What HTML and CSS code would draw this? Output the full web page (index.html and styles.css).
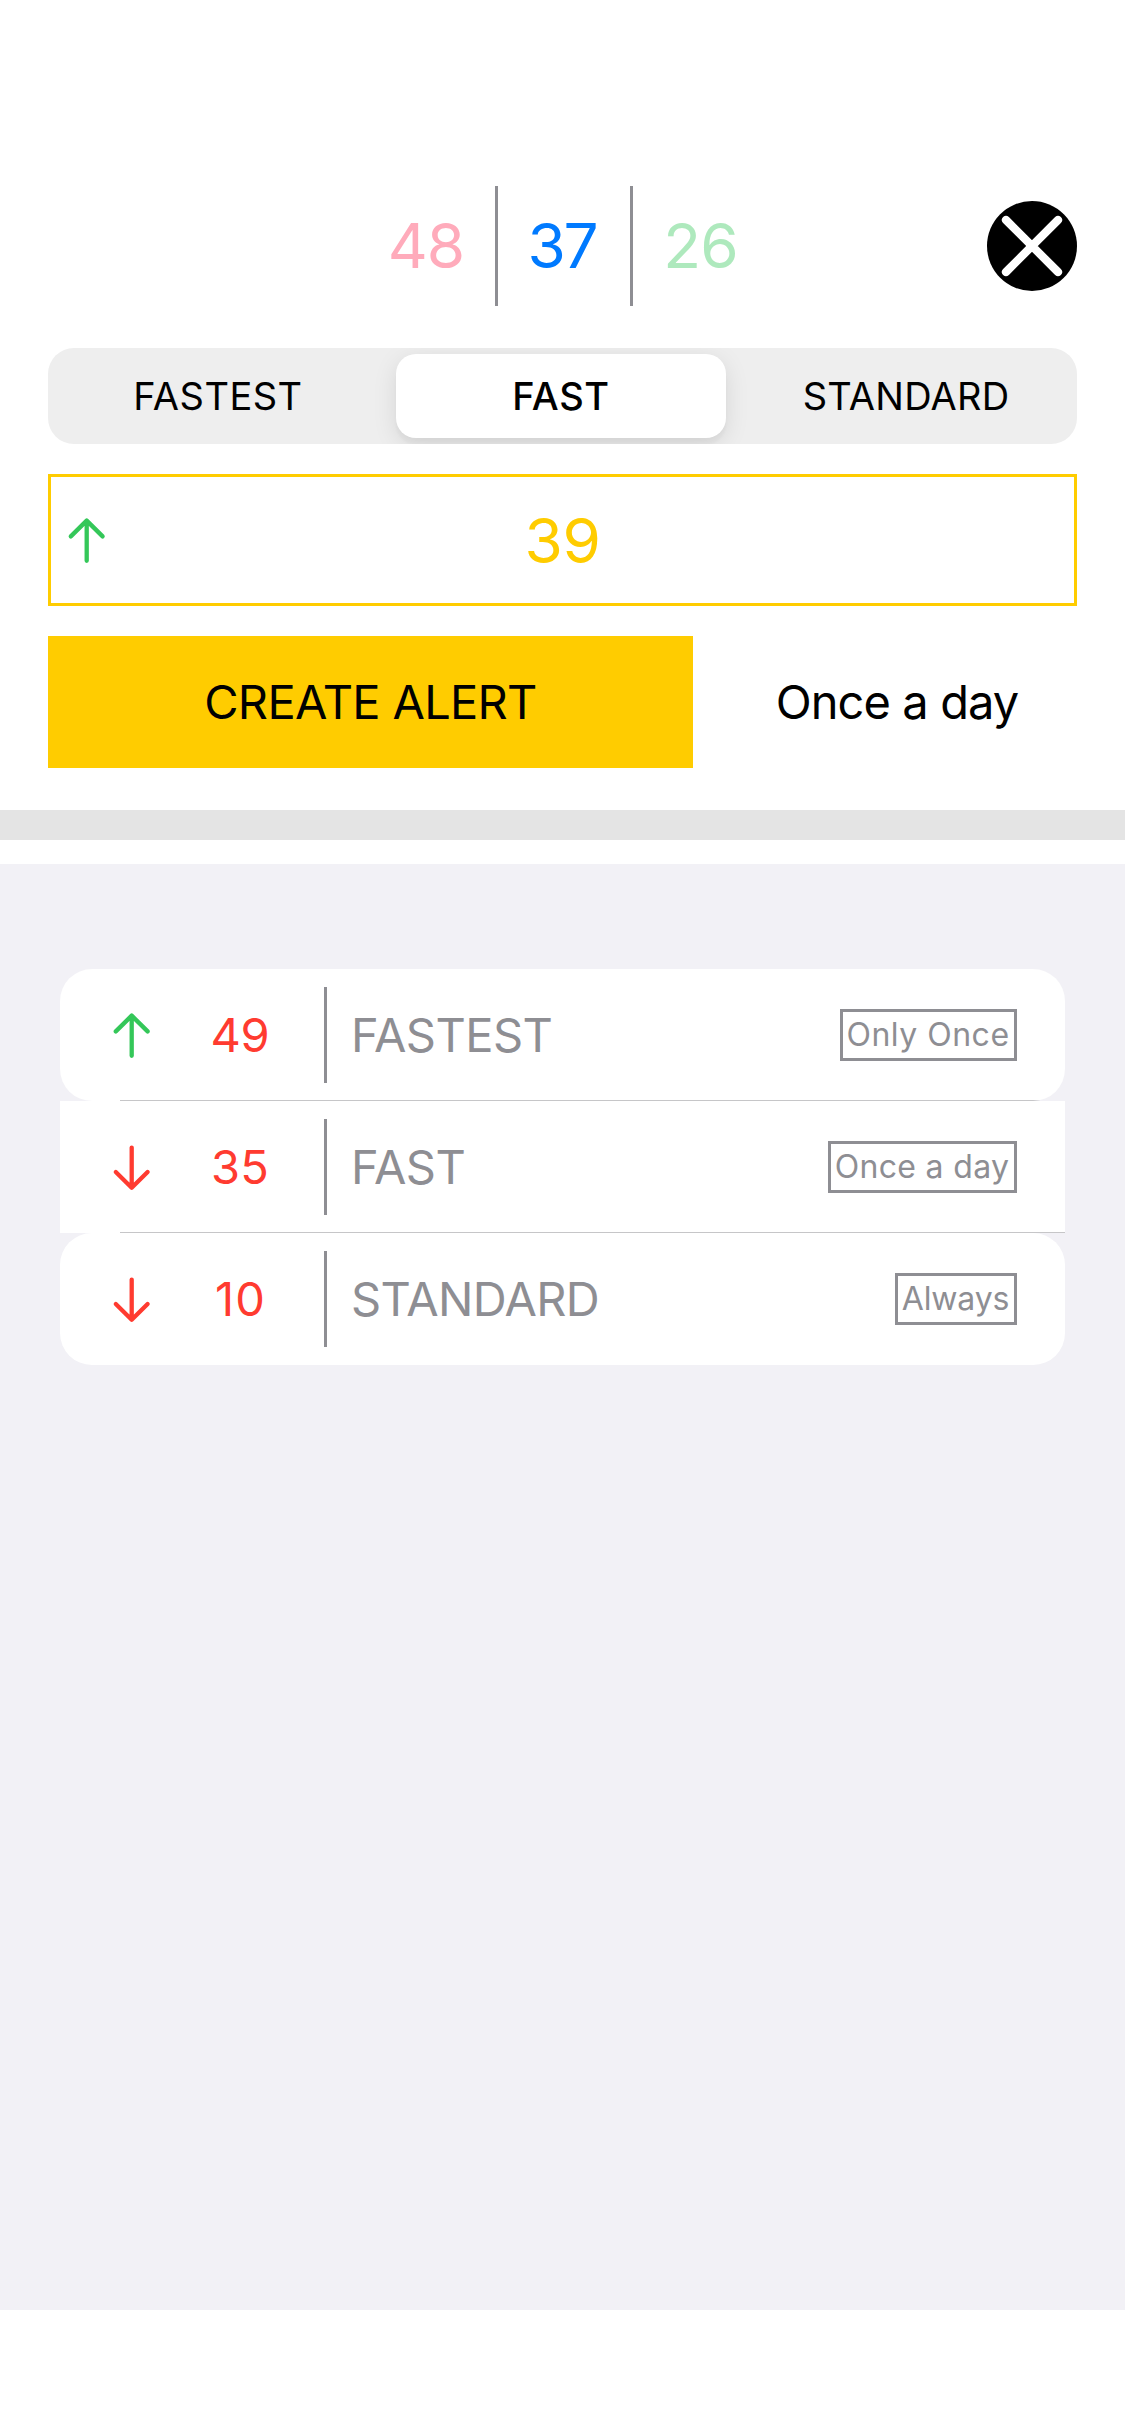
FILE: index.html
```html
<!DOCTYPE html>
<html lang="en">
<head>
<meta charset="utf-8">
<title>Alerts</title>
<link rel="stylesheet" href="styles.css">
</head>
<body>
<main class="screen">
  <header class="top">
    <span class="price fastest">48</span>
    <i class="rule"></i>
    <span class="price fast">37</span>
    <i class="rule"></i>
    <span class="price standard">26</span>
    <button class="close" aria-label="Close"><svg viewBox="0 0 90 90"><path d="M19 19 71 71M71 19 19 71"/></svg></button>
  </header>
  <nav class="segments">
    <span class="segment first">FASTEST</span>
    <span class="segment active">FAST</span>
    <span class="segment last">STANDARD</span>
  </nav>
  <div class="field">
    <svg class="arrow up"><path d="M23.7 48.8V8.6M7.8 24.4 23.7 8.6 39.6 24.4"/></svg>
    <span class="value">39</span>
  </div>
  <div class="actions">
    <button class="create">CREATE ALERT</button>
    <button class="repeat">Once a day</button>
  </div>
  <div class="band"></div>
  <section class="list">
    <div class="row first">
      <svg class="arrow up"><path d="M23.7 48.8V8.6M7.8 24.4 23.7 8.6 39.6 24.4"/></svg>
      <span class="limit n49">49</span><i class="line"></i><span class="name">FASTEST</span><span class="badge only">Only Once</span>
    </div>
    <div class="row">
      <svg class="arrow down"><path d="M23.7 8.6V48.8M7.8 33 23.7 48.8 39.6 33"/></svg>
      <span class="limit n35">35</span><i class="line"></i><span class="name">FAST</span><span class="badge daily">Once a day</span>
    </div>
    <div class="row last">
      <svg class="arrow down"><path d="M23.7 8.6V48.8M7.8 33 23.7 48.8 39.6 33"/></svg>
      <span class="limit n10">10</span><i class="line"></i><span class="name long">STANDARD</span><span class="badge always">Always</span>
    </div>
  </section>
</main>
</body>
</html>
```
FILE: styles.css
```css
* { box-sizing: border-box; }
body { margin: 0; background: #fff; font-family: Inter, "Liberation Sans", sans-serif; color: #000; }
button { border: 0; padding: 0; background: none; font: inherit; color: inherit; }
svg { display: block; fill: none; stroke-linecap: round; stroke-linejoin: round; }
.screen { width: 1125px; height: 2436px; padding-top: 186px; }

.top { display: grid; grid-template-columns: 138px 3px 132px 3px 135px 1fr; align-items: center; height: 120px; padding: 0 48px 0 357px; }
.price { font-size: 62px; line-height: 74px; text-align: center; }
.fastest { color: #ffabbb; letter-spacing: -1.05px; }
.fast { color: #007aff; letter-spacing: -2.2px; padding-right: 4px; }
.standard { color: #aee9bd; letter-spacing: -.8px; }
.rule { height: 120px; background: #8e8e93; }
.close { justify-self: end; width: 90px; height: 90px; border-radius: 50%; background: #000; }
.close svg { width: 90px; height: 90px; stroke: #fff; stroke-width: 8.2; }

.segments { display: grid; grid-template-columns: 348px 330px 351px; height: 96px; margin: 42px 48px 0; padding: 6px 0; border-radius: 26px; background: #eee; overflow: hidden; }
.segment { display: grid; place-items: center; font-size: 38px; font-weight: 400; letter-spacing: .49px; }
.segment.first { padding-right: 8px; }
.segment.last { padding-left: 9px; letter-spacing: .24px; }
.segment.active { font-weight: 550; letter-spacing: .6px; background: #fff; border-radius: 20px; box-shadow: 0 6px 24px rgba(0,0,0,.1), 0 6px 3px rgba(0,0,0,.03); }

.field { display: grid; grid-template-columns: 57px 1fr 57px; align-items: center; height: 132px; margin: 30px 48px 0; border: 3px solid #fc0; }
.field .arrow { margin-left: 12px; }
.value { color: #fc0; font-size: 62px; line-height: 74px; letter-spacing: -.3px; padding-top: 2px; text-align: center; }
.arrow { width: 48px; height: 56px; stroke-width: 4.3; }
.up { stroke: #34c759; }
.down { stroke: #ff3b30; }

.actions { display: flex; gap: 24px; height: 132px; margin: 30px 48px 0; font-size: 47px; }
.create { width: 645px; padding-bottom: 2px; background: #fc0; letter-spacing: -.7px; }
.repeat { flex: 1; padding-bottom: 2px; letter-spacing: -.9px; }
.band { height: 30px; margin: 42px 0 24px; background: #e4e4e4; }

.list { height: 1446px; padding: 105px 60px 0; background: #f2f1f6; }
.row { display: flex; align-items: center; height: 132px; padding: 0 48px; background: linear-gradient(#c6c6c8, #c6c6c8) 60px 100% / 100% 1px no-repeat #fff; font-size: 47px; }
.row.first { border-radius: 32px; }
.row.last { border-radius: 32px; background: #fff; }
.limit { width: 120px; margin: 0 24px; padding-bottom: 2px; text-align: center; color: #ff3b30; }
.n49 { letter-spacing: -.36px; }
.n35 { letter-spacing: .27px; }
.n10 { letter-spacing: 1.18px; padding-left: 1px; }
.line { width: 3px; height: 96px; background: #8e8e93; }
.name { flex: 1; padding: 0 0 2px 24px; color: #8e8e93; letter-spacing: -.55px; }
.long { letter-spacing: -.65px; }
.badge { display: grid; place-items: center; height: 52px; border: 3px solid #8e8e93; color: #8e8e93; font-size: 32px; line-height: 44px; padding: 0 1px 1px 0; white-space: nowrap; }
.only { width: 177px; letter-spacing: .51px; }
.daily { width: 189px; letter-spacing: .33px; }
.always { width: 122px; letter-spacing: -.16px; }
```
